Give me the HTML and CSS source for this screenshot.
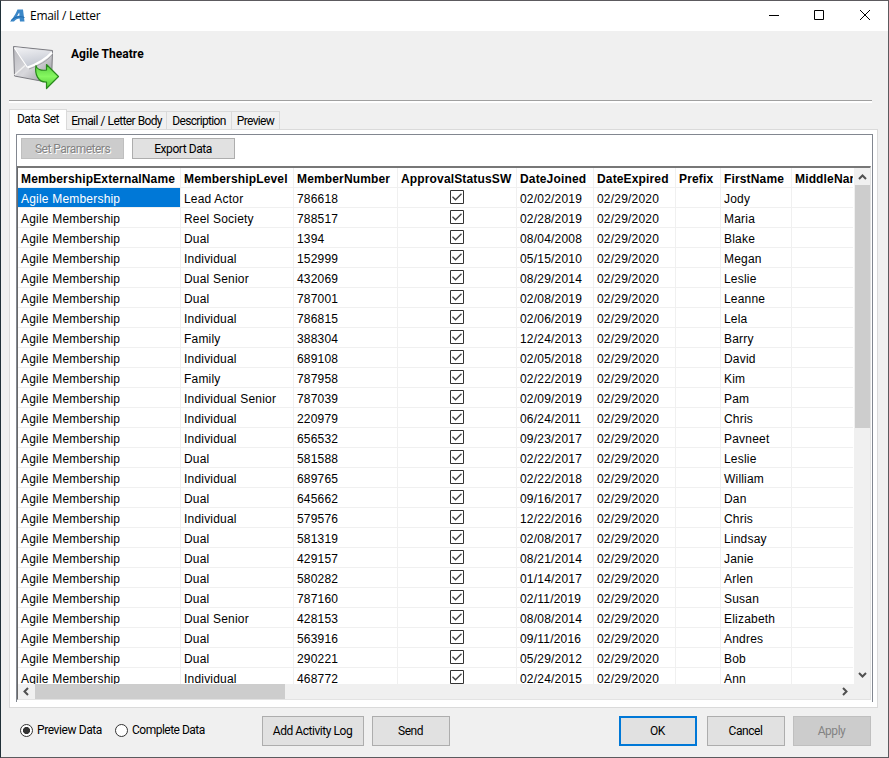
FILE: index.html
```
<!DOCTYPE html>
<html lang="en">
<head>
<meta charset="utf-8">
<title>Email / Letter</title>
<link rel="stylesheet" href="styles.css">
</head>
<body>
<div class="window">
  <header class="titlebar">
    <svg class="logo" width="17" height="13" viewBox="0 0 17 13"><path d="M1 12.500C3.500 10 7 4.500 8.500.5H14L15.500 12.500H11L10.600 9.500C8.500 9.500 6.500 10.500 5 12.500Z" fill="#3b87c8"/><path d="M8 7.200L10.200 3.500L10.500 6.500Z" fill="#fff"/><path d="M2 11.500C6 7.500 11 7 15.500 8.500" fill="none" stroke="#1c68ad"/></svg>
    <h1 class="title">Email / Letter</h1>
    <svg class="caption" width="112" height="16" viewBox="0 0 112 16"><path d="M3 8.500H13M48.500 3.500H57.500V12.500H48.500ZM94 3L104 13M104 3L94 13" fill="none" stroke="#000"/></svg>
  </header>
  <section class="heading">
    <svg width="48" height="46" viewBox="0 0 48 46">
      <defs>
        <linearGradient id="paper" x1="0" y1="0" x2="1" y2="1"><stop offset="0" stop-color="#b9b9be"/><stop offset=".5" stop-color="#d8d8dc"/><stop offset="1" stop-color="#8f8f94"/></linearGradient>
        <linearGradient id="flap" x1="0" y1="0" x2=".3" y2="1"><stop offset="0" stop-color="#f4f4f6"/><stop offset="1" stop-color="#c4c8d2"/></linearGradient>
        <linearGradient id="leaf" x1="0" y1="0" x2="0" y2="1"><stop offset="0" stop-color="#59cf42"/><stop offset=".5" stop-color="#86f760"/><stop offset="1" stop-color="#4cc733"/></linearGradient>
      </defs>
      <path d="M1.500 1.500L40.500 5.500L39.500 38L2.500 31Z" fill="url(#paper)" stroke="#7c7c82"/>
      <path d="M2.500 30L13 20.500" stroke="#f0f0f0" stroke-width="1.500"/>
      <path d="M2 2L40 6.500C35 13 27 17 15.500 22C12 16 7 9 2 2Z" fill="url(#flap)"/>
      <path d="M2.500 3C7 10 11 16 15.500 22.500" fill="none" stroke="#fff" stroke-width="1.200"/>
      <path d="M15.500 22.500C27 18.500 34 14 40 7.500" fill="none" stroke="#fff" stroke-width="2.200"/>
      <path d="M17 24C28 20 35 16 40 10" fill="none" stroke="#9a9aa0" stroke-width=".8"/>
      <path d="M24 20.500C24.500 24 29 26 34.500 25V19.500L46.500 31.500L34.500 43.500V37C26 37.500 22.500 29 24 20.500Z" fill="url(#leaf)" stroke="#28891b" stroke-width="1.200" stroke-linejoin="round"/>
    </svg>
    <h2 class="org">Agile Theatre</h2>
  </section>
  <hr class="rule">
  <nav class="tabs">
    <span class="tab active">Data Set</span><span class="tab body-tab">Email / Letter Body</span><span class="tab desc-tab">Description</span><span class="tab prev-tab">Preview</span>
  </nav>
  <main class="page">
    <div class="panel">
      <div class="toolbar">
        <button class="btn small off" disabled><span>Set Parameters</span></button>
        <button class="btn small">Export Data</button>
      </div>
      <div class="datagrid">
        <div class="view">
          <table>
            <colgroup><col class="c1"><col class="c2"><col class="c3"><col class="c4"><col class="c5"><col class="c6"><col class="c7"><col class="c8"><col class="c9"></colgroup>
            <thead><tr><th>MembershipExternalName</th><th>MembershipLevel</th><th>MemberNumber</th><th>ApprovalStatusSW</th><th>DateJoined</th><th>DateExpired</th><th>Prefix</th><th>FirstName</th><th>MiddleName</th></tr></thead>
            <tbody id="rows"></tbody>
          </table>
          <div class="vbar"><svg width="15" height="17" viewBox="0 0 15 17"><path d="M4 11L7.500 7.500L11 11" class="arrow"/></svg><i class="vthumb"></i><svg class="down" width="15" height="17" viewBox="0 0 15 17"><path d="M4 6L7.500 9.500L11 6" class="arrow"/></svg></div>
        </div>
        <div class="hbar"><svg width="17" height="15" viewBox="0 0 17 15"><path d="M10 4L6.500 7.500L10 11" class="arrow"/></svg><i class="hthumb"></i><svg class="right" width="17" height="15" viewBox="0 0 17 15"><path d="M7 4L10.500 7.500L7 11" class="arrow"/></svg></div>
      </div>
    </div>
  </main>
  <footer class="footer">
    <label class="radio"><i class="dot on"></i>Preview Data</label>
    <label class="radio second"><i class="dot"></i>Complete Data</label>
    <button class="btn log">Add Activity Log</button>
    <button class="btn send">Send</button>
    <button class="btn ok">OK</button>
    <button class="btn cancel">Cancel</button>
    <button class="btn off apply" disabled>Apply</button>
  </footer>
</div>
<script src="script.js"></script>
</body>
</html>
```
FILE: styles.css
```
* { box-sizing: border-box; }
body { margin: 0; width: 889px; height: 758px; overflow: hidden; font: 12px/15px Roboto, "Liberation Sans", sans-serif; color: #000; }
h1, h2 { margin: 0; }
svg { display: block; flex: none; }
.window { width: 889px; height: 758px; background: #f0f0f0; border: 1px solid #5c5a5e; border-left-color: #203038; display: flex; flex-direction: column; }
.titlebar { height: 30px; flex: none; background: #fff; display: flex; align-items: center; padding-left: 8px; }
.logo { margin-top: -1px; }
.title { font: 400 12px/16px "Open Sans", sans-serif; letter-spacing: -.28px; margin-left: 4px; }
.caption { margin: -2px 10px 0 auto; }
.heading { height: 69px; flex: none; display: flex; padding: 14px 0 0 11px; }
.org { font: 700 12px/14px Roboto, sans-serif; letter-spacing: .03px; margin: 2px 0 0 11px; }
.rule { width: 863px; height: 3px; flex: none; margin: 0 0 0 8px; border: 0; border-top: 1px solid #a0a0a0; background: #fff; }
.tabs { height: 27px; flex: none; display: flex; align-items: flex-end; margin: 0 0 -1px 8px; z-index: 1; letter-spacing: -.65px; word-spacing: .5px; }
.tab { height: 19px; border: 1px solid #dadada; border-left: 0; border-bottom: 1px solid #dadada; text-align: center; line-height: 19px; white-space: nowrap; }
.tab.active { width: 58px; height: 21px; border-left: 1px solid #dadada; border-bottom: 0; background: #fff; line-height: 18px; letter-spacing: -.45px; }
.body-tab { width: 100px; }
.desc-tab { width: 65px; }
.prev-tab { width: 48px; }
.page { margin-left: 8px; width: 869px; height: 579px; flex: none; background: #fff; border: 1px solid #dadada; padding: 4px 4px 5px 6px; }
.panel { width: 857px; height: 568px; border: 1px solid #828790; border-bottom: 0; }
.toolbar { height: 31px; padding: 3px 0 0 4px; display: flex; gap: 8px; }
.btn { background: #e1e1e1; border: 1px solid #adadad; color: #000; font: 12px/15px Roboto, sans-serif; letter-spacing: -.45px; padding: 0 1px 0 0; flex: none; }
.btn.small { width: 103px; height: 21px; line-height: 18px; }
.btn.off { background: #ccc; border-color: #bfbfbf; color: #838383; }
.btn.small.off { text-shadow: 1px 1px #fff; letter-spacing: -.5px; padding-left: 1px; }
.datagrid { width: 854px; height: 534px; border: 1px solid #696969; border-top: 2px solid #777; border-right-color: #e3e3e3; border-bottom-color: #e3e3e3; }
.view { display: flex; height: 516px; overflow: hidden; position: relative; }
table { width: 936px; flex: none; table-layout: fixed; border-collapse: separate; border-spacing: 0; font-family: "Liberation Sans", Arial, sans-serif; letter-spacing: .2px; }
.c1 { width: 163px; } .c2 { width: 113px; } .c3 { width: 104px; } .c4 { width: 119px; } .c5 { width: 77px; } .c6 { width: 82px; } .c7 { width: 45px; } .c8 { width: 71px; } .c9 { width: 162px; }
th, td { height: 20px; padding: 3px 0 0 3px; border-right: 1px solid #f0f0f0; border-bottom: 1px solid #f0f0f0; text-align: left; white-space: nowrap; line-height: 16px; overflow: hidden; }
th { letter-spacing: .15px; }
td.check { padding: 0; }
td.check svg { margin: -2px auto 0; }
tbody tr:first-child td:first-child { background: #0078d7; background-clip: padding-box; color: #fff; }
.vbar { position: absolute; right: 0; top: 0; width: 17px; height: 516px; padding-left: 1px; background: #f0f0f0; display: flex; flex-direction: column; border-left: 1px solid #fff; }
.vthumb { width: 15px; height: 243px; background: #cdcdcd; }
.down { margin-top: auto; }
.hbar { height: 15px; background: #f0f0f0; display: flex; }
.hthumb { width: 250px; height: 15px; background: #cdcdcd; }
.right { margin-left: auto; margin-right: 17px; }
.arrow { fill: none; stroke: #505050; stroke-width: 2; }
.footer { display: flex; padding: 8px 0 0 19px; letter-spacing: -.4px; }
.radio { display: flex; align-items: center; height: 28px; width: 95px; white-space: nowrap; }
.radio.second { width: 147px; letter-spacing: -.5px; }
.dot { width: 13px; height: 13px; border: 1px solid #333; border-radius: 50%; background: #fff; margin-right: 4px; flex: none; }
.dot.on { background: radial-gradient(circle, #333 0 3.200px, #fff 3.900px); }
.footer .btn { height: 30px; width: 78px; }
.footer .log { width: 102px; }
.footer .send { margin-left: 8px; }
.footer .ok { margin-left: 169px; border: 2px solid #0078d7; }
.footer .cancel { margin-left: 10px; }
.footer .apply { margin-left: 8px; }
```
FILE: script.js
```
const members = [
  ["Lead Actor", "786618", "02/02/2019", "Jody"],
  ["Reel Society", "788517", "02/28/2019", "Maria"],
  ["Dual", "1394", "08/04/2008", "Blake"],
  ["Individual", "152999", "05/15/2010", "Megan"],
  ["Dual Senior", "432069", "08/29/2014", "Leslie"],
  ["Dual", "787001", "02/08/2019", "Leanne"],
  ["Individual", "786815", "02/06/2019", "Lela"],
  ["Family", "388304", "12/24/2013", "Barry"],
  ["Individual", "689108", "02/05/2018", "David"],
  ["Family", "787958", "02/22/2019", "Kim"],
  ["Individual Senior", "787039", "02/09/2019", "Pam"],
  ["Individual", "220979", "06/24/2011", "Chris"],
  ["Individual", "656532", "09/23/2017", "Pavneet"],
  ["Dual", "581588", "02/22/2017", "Leslie"],
  ["Individual", "689765", "02/22/2018", "William"],
  ["Dual", "645662", "09/16/2017", "Dan"],
  ["Individual", "579576", "12/22/2016", "Chris"],
  ["Dual", "581319", "02/08/2017", "Lindsay"],
  ["Dual", "429157", "08/21/2014", "Janie"],
  ["Dual", "580282", "01/14/2017", "Arlen"],
  ["Dual", "787160", "02/11/2019", "Susan"],
  ["Dual Senior", "428153", "08/08/2014", "Elizabeth"],
  ["Dual", "563916", "09/11/2016", "Andres"],
  ["Dual", "290221", "05/29/2012", "Bob"],
  ["Individual", "468772", "02/24/2015", "Ann"]
];
const box = '<svg width="14" height="14" viewBox="0 0 14 14"><path d="M.5.5H13.500V13.500H.5Z" fill="#fff" stroke="#333"/><path d="M2.500 6.800L5.500 9.800L11.500 3.800" fill="none" stroke="#444" stroke-width="1.400"/></svg>';
document.getElementById("rows").innerHTML = members.map(([level, number, joined, first]) =>
  `<tr><td>Agile Membership</td><td>${level}</td><td>${number}</td><td class="check">${box}</td><td>${joined}</td><td>02/29/2020</td><td></td><td>${first}</td><td></td></tr>`
).join("");
```
